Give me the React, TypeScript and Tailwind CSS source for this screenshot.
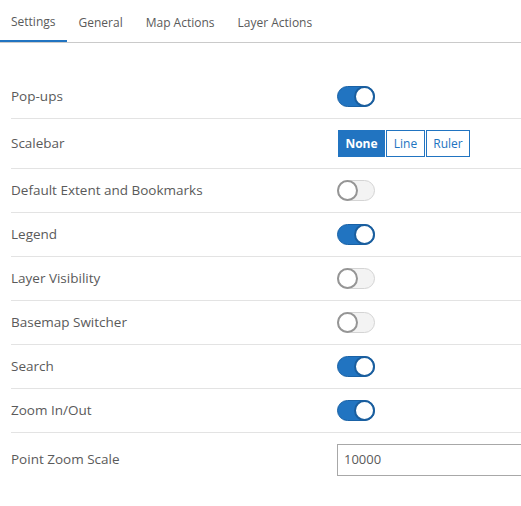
import React from "react";

const font = { fontFamily: '"Open Sans", "Liberation Sans", sans-serif' };

function Toggle({ on }: { on: boolean }) {
  if (on) {
    return (
      <div className="relative w-[38px] h-[21px] rounded-full bg-[#2174c1] border border-[#1a62a6]">
        <div className="absolute right-[-1px] top-[-1px] w-[21px] h-[21px] rounded-full bg-white border-2 border-[#1a5e9e]" />
      </div>
    );
  }
  return (
    <div className="relative w-[38px] h-[21px] rounded-full bg-[#f3f3f3] border border-[#d4d4d4]">
      <div className="absolute left-[-1px] top-[-1px] w-[21px] h-[21px] rounded-full bg-white border-2 border-[#959595]" />
    </div>
  );
}

function Row({ label, children, h = "h-[44px]" }: { label: string; children: React.ReactNode; h?: string }) {
  return (
    <div className={`flex items-center ${h} border-b border-[#e3e3e3]`}>
      <div className="w-[326px] text-[13.5px] text-[#5a5a5a]">{label}</div>
      <div className="flex items-center">{children}</div>
    </div>
  );
}

export default function App() {
  const tabs = ["Settings", "General", "Map Actions", "Layer Actions"];
  return (
    <div className="w-[521px] h-[506px] bg-white overflow-hidden" style={font}>
      <div className="flex h-[43px] border-b border-[#cacaca]">
        {tabs.map((t, i) => (
          <div
            key={t}
            className={`h-[42px] flex items-center pt-[4px] px-[11px] text-[12px] text-[#5a5a5a] ${
              i === 0 ? "border-b-2 border-[#2174c1]" : ""
            } ${i > 0 ? "ml-[1px]" : ""}`}
          >
            {t}
          </div>
        ))}
      </div>
      <div className="pl-[11px] pt-[32px] w-[560px]">
        <Row label="Pop-ups">
          <Toggle on />
        </Row>
        <Row label="Scalebar" h="h-[50px]">
          <div className="flex gap-[1px] ml-[1px]">
            <div className="h-[27px] w-[47px] flex items-center justify-center bg-[#2174c1] text-white text-[12px] font-bold">None</div>
            <div className="h-[27px] w-[39px] flex items-center justify-center border border-[#2174c1] text-[#2174c1] text-[12px]">Line</div>
            <div className="h-[27px] w-[44px] flex items-center justify-center border border-[#2174c1] text-[#2174c1] text-[12px]">Ruler</div>
          </div>
        </Row>
        <Row label="Default Extent and Bookmarks">
          <Toggle on={false} />
        </Row>
        <Row label="Legend">
          <Toggle on />
        </Row>
        <Row label="Layer Visibility">
          <Toggle on={false} />
        </Row>
        <Row label="Basemap Switcher">
          <Toggle on={false} />
        </Row>
        <Row label="Search">
          <Toggle on />
        </Row>
        <Row label="Zoom In/Out">
          <Toggle on />
        </Row>
        <div className="flex items-center h-[53px]">
          <div className="w-[326px] text-[13.5px] text-[#5a5a5a]">Point Zoom Scale</div>
          <div className="w-[200px] h-[32px] border border-[#a8a8a8] flex items-center px-[6px] text-[13px] text-[#5a5a5a]">10000</div>
        </div>
      </div>
    </div>
  );
}
